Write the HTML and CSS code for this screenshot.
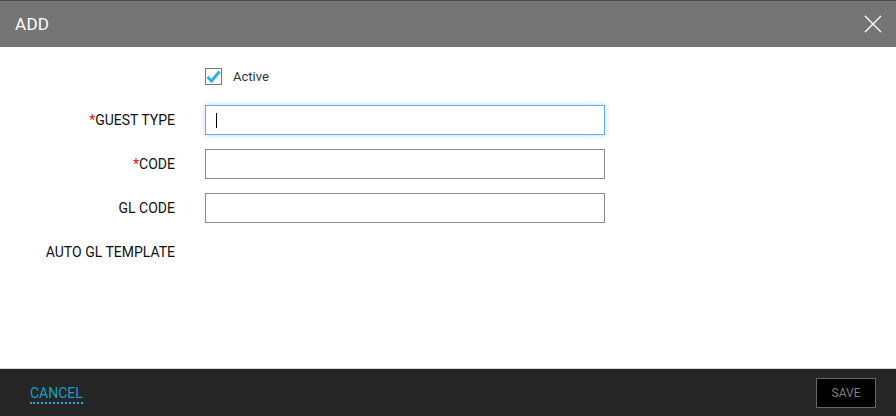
FILE: index.html
```html
<!DOCTYPE html>
<html>
<head>
    <title>Add Guest Type</title>
    <link rel="stylesheet" href="styles.css">
</head>
<body>
    <div class="modal">
        <header class="modal-header">
            <div class="modal-title">ADD</div>
            <button class="close-btn" aria-label="Close">
                <svg width="18" height="18" viewBox="0 0 18 18">
                    <path d="M1 1 L17 17 M17 1 L1 17" stroke="#fff" stroke-width="1.4" fill="none"/>
                </svg>
            </button>
        </header>

        <div class="modal-body">
            <div class="form-grid">
                <div class="label"></div>
                <label class="check-row">
                    <span class="checkbox">
                        <svg width="15" height="13" viewBox="0 0 15 13">
                            <path d="M1.5 7 L5.5 11 L13.5 1.5" stroke="#29b6e6" stroke-width="3" fill="none"/>
                        </svg>
                    </span>
                    <span class="check-text">Active</span>
                </label>

                <div class="label"><span class="req">*</span>GUEST TYPE</div>
                <div class="field"><input type="text" class="form-control focused"><span class="caret"></span></div>

                <div class="label"><span class="req">*</span>CODE</div>
                <div class="field"><input type="text" class="form-control"></div>

                <div class="label">GL CODE</div>
                <div class="field"><input type="text" class="form-control"></div>

                <div class="label">AUTO GL TEMPLATE</div>
                <div class="field"></div>
            </div>
        </div>

        <footer class="modal-footer">
            <a href="#" class="cancel-link">CANCEL</a>
            <button class="save-btn">SAVE</button>
        </footer>
    </div>
</body>
</html>
```

FILE: styles.css
```css
body {
    margin: 0;
    padding: 0;
    background-color: #fff;
    font-family: Roboto, "Liberation Sans", sans-serif;
}

.modal {
    display: flex;
    flex-direction: column;
    height: 416px;
}

.modal-header {
    display: flex;
    justify-content: space-between;
    align-items: center;
    height: 46px;
    background-color: #757575;
    border-top: 1px solid #4a4a4a;
    padding: 0 15px;
}

.modal-title {
    color: #fff;
    font-size: 17px;
    letter-spacing: 0.3px;
}

.close-btn {
    background: none;
    border: none;
    padding: 0;
    margin-right: -1px;
    display: flex;
    cursor: pointer;
}

.modal-body {
    flex: 1;
    padding-top: 21px;
}

.form-grid {
    display: grid;
    grid-template-columns: 175px 400px;
    grid-template-rows: 23px repeat(4, 30px);
    column-gap: 30px;
    row-gap: 14px;
    align-items: center;
}

.form-grid > .check-row {
    align-self: start;
}

.label {
    text-align: right;
    font-size: 14px;
    color: #111;
}

.req {
    color: #e8131b;
}

.check-row {
    display: flex;
    align-items: center;
    gap: 11px;
    cursor: pointer;
}

.checkbox {
    width: 15px;
    height: 15px;
    border: 1px solid #7a7a7a;
    display: flex;
    align-items: center;
    justify-content: center;
}

.check-text {
    font-size: 13px;
    color: #333;
}

.field {
    position: relative;
    height: 30px;
}

.form-control {
    box-sizing: border-box;
    width: 400px;
    height: 30px;
    border: 1px solid #8a8a8a;
    outline: none;
    margin: 0;
    padding: 0 10px;
    font-size: 14px;
}

.form-control.focused {
    border-color: #62aee8;
    box-shadow: 0 0 5px rgba(98, 174, 232, 0.45);
}

.caret {
    position: absolute;
    left: 11px;
    top: 8px;
    width: 1px;
    height: 15px;
    background-color: #000;
}

.modal-footer {
    display: flex;
    justify-content: space-between;
    align-items: center;
    height: 47px;
    background-color: #262626;
    border-top: 1px solid #d4d4d4;
    padding: 0 20px 0 30px;
}

.cancel-link {
    color: #1c9cc4;
    font-size: 14px;
    text-decoration: none;
    border-bottom: 2px dotted #17a9d8;
    padding-bottom: 1px;
    margin-top: 4px;
}

.save-btn {
    box-sizing: border-box;
    width: 60px;
    height: 30px;
    background-color: #000;
    border: 1px solid #666;
    color: #7d7d7d;
    font-size: 12px;
    font-family: Roboto, "Liberation Sans", sans-serif;
    padding: 0;
    cursor: pointer;
}
```
